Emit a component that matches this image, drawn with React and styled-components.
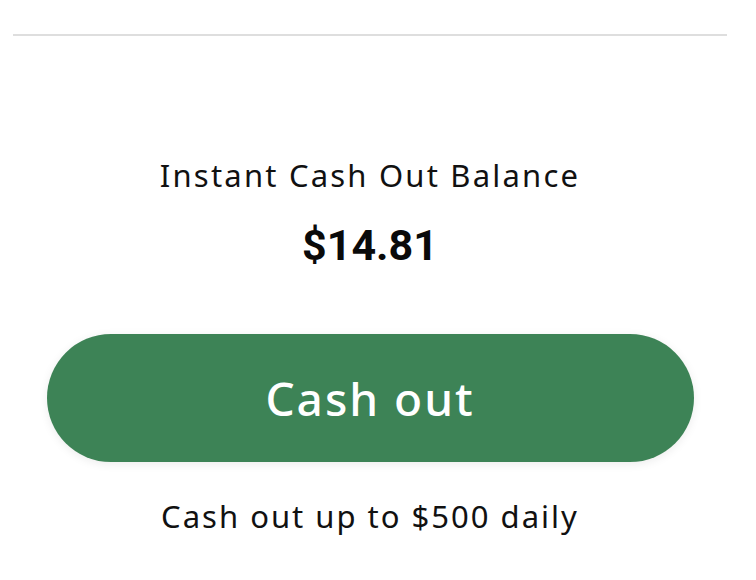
import React from 'react';
import styled, { createGlobalStyle } from 'styled-components';

const GlobalStyle = createGlobalStyle`
  html, body {
    margin: 0;
    padding: 0;
    background: #ffffff;
  }
  body {
    font-family: "Noto Sans", Lato, sans-serif;
  }
`;

const Page = styled.div`
  width: 756px;
  height: 580px;
  padding: 34px 16px 0 0;
  box-sizing: border-box;
  display: flex;
  flex-direction: column;
  align-items: center;
`;

const Divider = styled.div`
  width: 714px;
  height: 2px;
  background: #dedede;
`;

const Label = styled.div`
  margin-top: 119px;
  font-size: 31px;
  line-height: 40px;
  color: #111;
  letter-spacing: 2.2px;
`;

const Amount = styled.div`
  margin-top: 25px;
  font-family: Roboto, "Noto Sans", sans-serif;
  font-size: 43px;
  line-height: 50px;
  font-weight: 700;
  color: #0a0a0a;
`;

const CashButton = styled.button`
  margin-top: 64px;
  width: 647px;
  height: 128px;
  border: none;
  border-radius: 64px;
  background: #3d8356;
  color: #ffffff;
  font-family: "Noto Sans", Lato, sans-serif;
  font-size: 46px;
  font-weight: 500;
  letter-spacing: 2px;
  box-shadow: 0 2px 10px rgba(0, 0, 0, 0.08);
  cursor: pointer;
`;

const Note = styled.div`
  margin-top: 34px;
  font-size: 31px;
  line-height: 40px;
  color: #111;
  letter-spacing: 2px;
`;

export default function App() {
  return (
    <>
      <GlobalStyle />
      <Page>
        <Divider />
        <Label>Instant Cash Out Balance</Label>
        <Amount>$14.81</Amount>
        <CashButton>Cash out</CashButton>
        <Note>Cash out up to $500 daily</Note>
      </Page>
    </>
  );
}
